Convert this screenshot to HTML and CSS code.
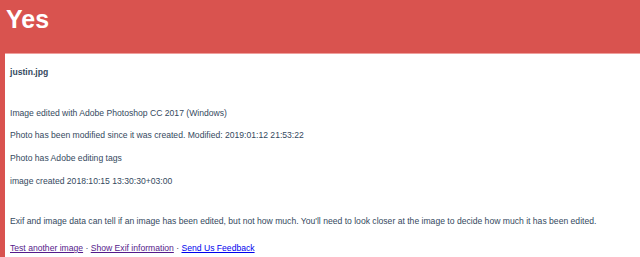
FILE: index.html
```html
<!DOCTYPE html>
<html lang="en">
<head>
    <meta charset="UTF-8">
    <meta name="viewport" content="width=device-width, initial-scale=1.0">
    <title>Yes</title>
    <link rel="stylesheet" href="styles.css">
</head>
<body>
    <div class="header">
        <h1>Yes</h1>
    </div>
    <div class="result">
        <h4 class="file-name">justin.jpg</h4>
        <div class="findings">
            <p>Image edited with Adobe Photoshop CC 2017 (Windows)</p>
            <p>Photo has been modified since it was created. Modified: 2019:01:12 21:53:22</p>
            <p>Photo has Adobe editing tags</p>
            <p>image created 2018:10:15 13:30:30+03:00</p>
        </div>
        <p class="note">Exif and image data can tell if an image has been edited, but not how much. You'll need to look closer at the image to decide how much it has been edited.</p>
        <p class="links">
            <a href="#" class="visited">Test another image</a> &middot;
            <a href="#" class="visited">Show Exif information</a> &middot;
            <a href="#">Send Us Feedback</a>
        </p>
    </div>
</body>
</html>
```

FILE: styles.css
```css
body {
    font-family: "Liberation Sans", Arial, sans-serif;
    background-color: #d9534f;
    margin: 0;
    color: #34495e;
}
.header {
    padding: 4px 6px 0;
    height: 53px;
    box-sizing: border-box;
}
h1 {
    color: #ffffff;
    font-size: 25px;
    font-weight: bold;
    margin: 0;
    line-height: 30px;
}
.result {
    background-color: #ffffff;
    margin-left: 5px;
    padding: 12.5px 5px 0;
    border-top: 1px solid #ef9f9c;
    font-size: 8.6px;
    line-height: 11px;
    height: calc(100vh - 53px);
    box-sizing: border-box;
}
.file-name {
    font-size: 8.6px;
    font-weight: bold;
    margin: 0 0 30.3px;
}
.findings p {
    margin: 0 0 11.7px;
}
.note {
    margin: 28.7px 0 16.5px;
}
.links {
    margin: 0;
}
a {
    color: #0000ee;
}
a.visited {
    color: #551a8b;
}
```
